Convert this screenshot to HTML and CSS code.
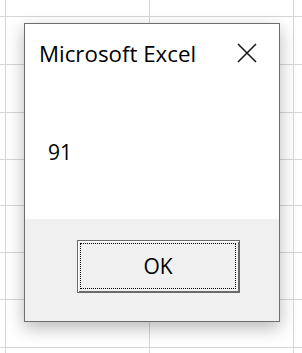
FILE: index.html
```html
<!DOCTYPE html>
<html>
<head>
<meta charset="utf-8">
<link rel="stylesheet" href="styles.css">
</head>
<body>
<div class="sheet">
  <div class="cell"></div><div class="cell"></div><div class="cell"></div><div class="cell"></div>
  <div class="cell"></div><div class="cell"></div><div class="cell"></div><div class="cell"></div>
  <div class="cell"></div><div class="cell"></div><div class="cell"></div><div class="cell"></div>
  <div class="cell"></div><div class="cell"></div><div class="cell"></div><div class="cell"></div>
  <div class="cell"></div><div class="cell"></div><div class="cell"></div><div class="cell"></div>
  <div class="cell"></div><div class="cell"></div><div class="cell"></div><div class="cell"></div>
  <div class="cell"></div><div class="cell"></div><div class="cell"></div><div class="cell"></div>
  <div class="cell"></div><div class="cell"></div><div class="cell"></div><div class="cell"></div>
  <div class="cell"></div><div class="cell"></div><div class="cell"></div><div class="cell"></div>
</div>
<div class="dialog">
  <div class="body">
    <div class="titlebar">
      <span class="title">Microsoft Excel</span>
      <svg class="close" width="20" height="20" viewBox="0 0 20 20">
        <path d="M1 1 L19 19 M19 1 L1 19" stroke="#1a1a1a" stroke-width="1.6" fill="none"/>
      </svg>
    </div>
    <div class="message">91</div>
  </div>
  <div class="footer">
    <button class="btn"><span class="focus">OK</span></button>
  </div>
</div>
</body>
</html>
```
FILE: styles.css
```css
html, body {
  margin: 0;
  padding: 0;
  width: 302px;
  height: 353px;
  overflow: hidden;
  background: #fff;
  font-family: "Open Sans", "Noto Sans", sans-serif;
}
.sheet {
  display: grid;
  grid-template-columns: 5px 143px 143px 9px;
  grid-template-rows: 16px 47px 47px 46px 45px 46px 46px 47px 6px;
  gap: 1px;
  background: #d6d6d6;
  width: 302px;
  height: 353px;
}
.cell {
  background: #fff;
}
.dialog {
  position: absolute;
  left: 24px;
  top: 23px;
  width: 256px;
  height: 299px;
  box-sizing: border-box;
  border: 1px solid #6e6e6e;
  background: #fff;
  display: flex;
  flex-direction: column;
  box-shadow: 0 6px 16px rgba(0, 0, 0, 0.28);
}
.body {
  height: 195px;
  background: #fff;
}
.titlebar {
  display: flex;
  justify-content: space-between;
  align-items: center;
  padding: 14px 22px 0 14px;
  height: 30px;
}
.title {
  font-size: 22.3px;
  color: #000;
}
.close {
  display: block;
}
.message {
  padding: 70px 0 0 23px;
  font-size: 21px;
  color: #000;
}
.footer {
  flex: 1;
  background: #f0f0f0;
  padding: 21px 0 0 52px;
}
.btn {
  width: 163px;
  height: 53px;
  box-sizing: border-box;
  border: 1px solid #6a6a6a;
  box-shadow: inset 1px 1px 0 #fff, inset -1px -1px 0 #6a6a6a;
  background: #f0f0f0;
  padding: 2px 3px 3px 2px;
  margin: 0;
  display: flex;
  font-family: "Open Sans", "Noto Sans", sans-serif;
}
.focus {
  flex: 1;
  border: 1px dotted #000;
  display: flex;
  align-items: center;
  justify-content: center;
  font-size: 21px;
  color: #000;
}
```
